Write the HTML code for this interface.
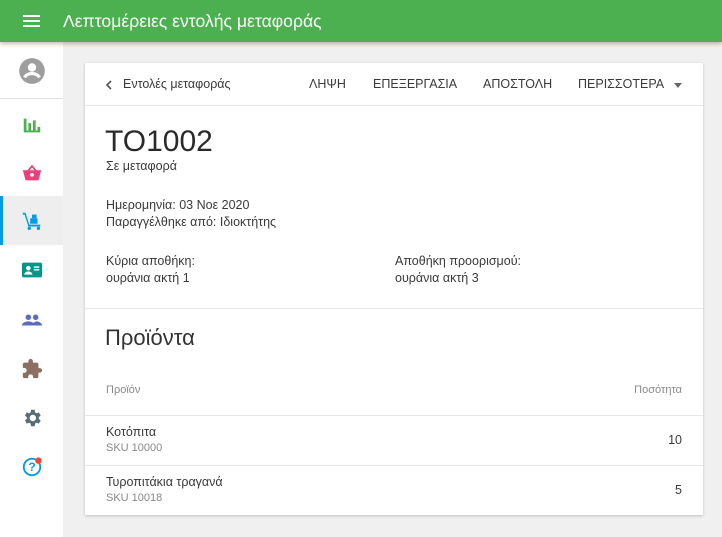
<!DOCTYPE html>
<html><head><meta charset="utf-8"><style>
*{box-sizing:border-box;margin:0;padding:0}
body{width:722px;height:537px;overflow:hidden;background:#f0f0f0;font-family:"Liberation Sans",sans-serif;color:#222;position:relative}
.top{position:absolute;left:0;top:0;width:722px;height:42px;background:#4caf50;box-shadow:0 2px 4px rgba(0,0,0,.25);z-index:2}
.top .t{position:absolute;left:63px;top:11px;color:#fff;font-size:17.6px}
.ham{position:absolute;left:23px;top:15px;width:17px}
.ham i{display:block;height:2px;background:#fff;margin-bottom:3px}
.side{position:absolute;left:0;top:42px;width:63px;height:495px;background:#fff}
.ic{position:absolute;left:21px;width:22px;height:22px}
.card{position:absolute;left:85px;top:63px;width:618px;height:452px;background:#fff;box-shadow:0 1px 3px rgba(0,0,0,.2)}
.s{position:absolute;font-size:12.5px;color:#3a3a3a;white-space:nowrap}
.g{color:#888;font-size:11px}
.hr{position:absolute;left:0;width:618px;height:1px;background:#e8e8e8}
</style></head><body>
<div class="top"><div class="ham"><i></i><i></i><i></i></div><div class="t">Λεπτομέρειες εντολής μεταφοράς</div></div>
<div class="side">
<svg class="ic" style="top:15px;left:18px;width:28px;height:28px" viewBox="0 0 24 24"><circle cx="12" cy="12" r="11" fill="#9e9e9e"/><circle cx="12" cy="9" r="3.6" fill="#fff"/><path d="M5.5 17.5c1.5-2.5 4-3.3 6.5-3.3s5 .8 6.5 3.3" stroke="#fff" stroke-width="2.6" fill="none"/></svg>
<div style="position:absolute;left:0;top:56px;width:63px;height:1px;background:#e0e0e0"></div>
<svg class="ic" style="top:72px" viewBox="0 0 24 24"><path fill="#4caf50" d="M3 5h3v14H3zM8 10h3v9H8zM13 7h3v12h-3zM18 14h3v5h-3zM3 18h18v2H3z"/></svg>
<svg class="ic" style="top:120px" viewBox="0 0 24 24"><path fill="#ec407a" d="M12 3l-5 6H2l3 11h14l3-11h-5zM9.5 9L12 6l2.5 3z"/><circle cx="12" cy="14" r="2" fill="#fff"/></svg>
<div style="position:absolute;left:0;top:154px;width:63px;height:49px;background:#eeeeee;border-left:3px solid #039be5"></div>
<svg class="ic" style="top:168px" viewBox="0 0 24 24"><path fill="#039be5" d="M2 3h3l4 13h12v2H8L4 5H2z"/><rect x="10" y="9" width="8" height="6" fill="#039be5"/><rect x="12" y="5" width="5" height="4" fill="#039be5"/><circle cx="9" cy="20" r="1.8" fill="#039be5"/><circle cx="19" cy="20" r="1.8" fill="#039be5"/></svg>
<svg class="ic" style="top:217px" viewBox="0 0 24 24"><rect x="1" y="4" width="22" height="16" rx="2" fill="#009688"/><circle cx="8" cy="10" r="2.5" fill="#fff"/><path d="M3.5 17c.5-2.5 2.5-3.3 4.5-3.3s4 .8 4.5 3.3z" fill="#fff"/><path d="M14 8h6v1.5h-6zM14 11h6v1.5h-6z" fill="#fff"/></svg>
<svg class="ic" style="top:267px" viewBox="0 0 24 24"><circle cx="8" cy="9" r="3" fill="#5c6bc0"/><circle cx="16" cy="9" r="3" fill="#5c6bc0"/><path d="M1 18c0-3 4-4.5 7-4.5s7 1.5 7 4.5zM12 18c0-2 3-4.5 5-4.5s6 1.5 6 4.5z" fill="#5c6bc0"/></svg>
<svg class="ic" style="top:316px" viewBox="0 0 24 24"><path fill="#8d6e63" d="M20.5 11H19V7a2 2 0 0 0-2-2h-4V3.5a2.5 2.5 0 0 0-5 0V5H4a2 2 0 0 0-2 2v3.8h1.5a2.7 2.7 0 0 1 0 5.4H2V20a2 2 0 0 0 2 2h3.8v-1.5a2.7 2.7 0 0 1 5.4 0V22H17a2 2 0 0 0 2-2v-4h1.5a2.5 2.5 0 0 0 0-5z"/></svg>
<svg class="ic" style="top:365px" viewBox="0 0 24 24"><path fill="#546e7a" d="M19.4 13a7.5 7.5 0 0 0 0-2l2.1-1.6-2-3.5-2.5 1a7.3 7.3 0 0 0-1.7-1L14.9 3h-4l-.4 2.9a7.3 7.3 0 0 0-1.700 1l-2.500-1-2 3.5L6.4 11a7.5 7.5 0 0 0 0 2l-2.1 1.6 2 3.5 2.5-1a7.3 7.3 0 0 0 1.7 1l.4 2.9h4l.4-2.9a7.3 7.3 0 0 0 1.7-1l2.5 1 2-3.5zM12.9 15.5a3.5 3.5 0 1 1 0-7 3.5 3.5 0 0 1 0 7z"/></svg>
<svg class="ic" style="top:414px" viewBox="0 0 24 24"><circle cx="12" cy="12" r="9" fill="none" stroke="#039be5" stroke-width="2"/><text x="12" y="16.5" text-anchor="middle" font-size="13" font-weight="bold" fill="#039be5" font-family="Liberation Sans">?</text><circle cx="19" cy="5" r="3.5" fill="#f44336"/></svg>
</div>
<div class="card">
<svg style="position:absolute;left:19px;top:16px" width="10" height="12" viewBox="0 0 10 12"><path d="M7 2L3 6l4 4" stroke="#555" stroke-width="1.6" fill="none"/></svg>
<div class="s" style="left:38px;top:14px">Εντολές μεταφοράς</div>
<div class="s" style="left:224px;top:14px">ΛΗΨΗ</div>
<div class="s" style="left:288px;top:14px">ΕΠΕΞΕΡΓΑΣΙΑ</div>
<div class="s" style="left:398px;top:14px">ΑΠΟΣΤΟΛΗ</div>
<div class="s" style="left:493px;top:14px">ΠΕΡΙΣΣΟΤΕΡΑ</div>
<div style="position:absolute;left:589px;top:20px;border:4px solid transparent;border-top:5px solid #666;border-bottom:0"></div>
<div class="hr" style="top:42px"></div>
<div class="s" style="left:20px;top:62px;font-size:30px;color:#2a2a2a">TO1002</div>
<div class="s" style="left:21px;top:96px">Σε μεταφορά</div>
<div class="s" style="left:21px;top:135px">Ημερομηνία: 03 Νοε 2020</div>
<div class="s" style="left:21px;top:152px">Παραγγέλθηκε από: Ιδιοκτήτης</div>
<div class="s" style="left:21px;top:191px">Κύρια αποθήκη:</div>
<div class="s" style="left:21px;top:208px">ουράνια ακτή 1</div>
<div class="s" style="left:310px;top:191px">Αποθήκη προορισμού:</div>
<div class="s" style="left:310px;top:208px">ουράνια ακτή 3</div>
<div class="hr" style="top:245px"></div>
<div class="s" style="left:20px;top:262px;font-size:22px;color:#333">Προϊόντα</div>
<div class="s g" style="left:21px;top:321px">Προϊόν</div>
<div class="s g" style="right:21px;top:321px">Ποσότητα</div>
<div class="hr" style="top:352px"></div>
<div class="s" style="left:21px;top:362px">Κοτόπιτα</div>
<div class="s g" style="left:21px;top:379px">SKU 10000</div>
<div class="s" style="right:21px;top:370px">10</div>
<div class="hr" style="top:402px"></div>
<div class="s" style="left:21px;top:412px">Τυροπιτάκια τραγανά</div>
<div class="s g" style="left:21px;top:429px">SKU 10018</div>
<div class="s" style="right:21px;top:420px">5</div>
</div>
</body></html>
